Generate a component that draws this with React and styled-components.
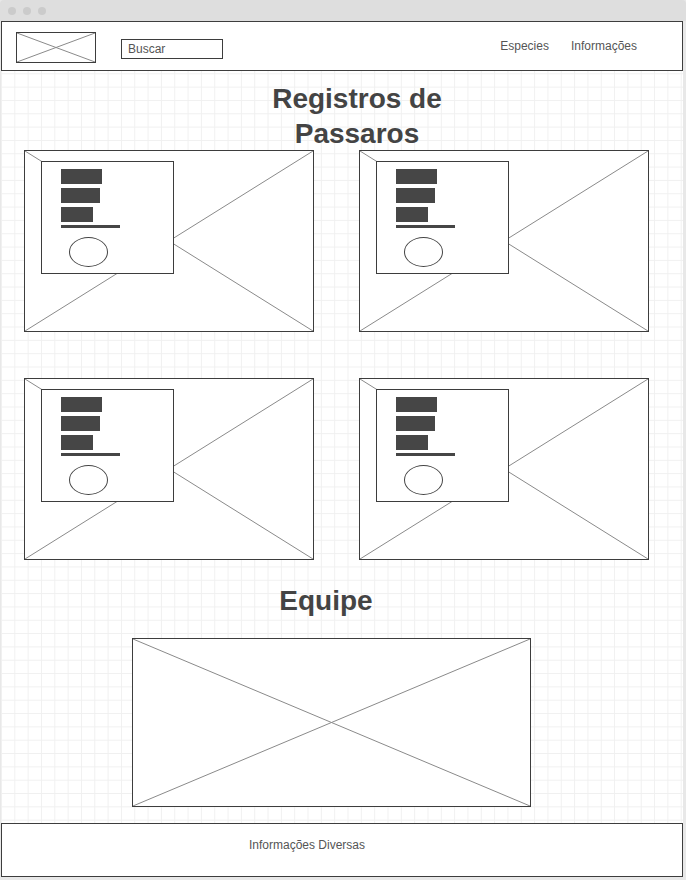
import React from "react"
import styled, { createGlobalStyle } from "styled-components"

const GlobalStyle = createGlobalStyle`
	html, body {
		margin: 0;
		padding: 0;
		background: #e8e8e8;
	}
	body {
		font-family: "Liberation Sans", Arial, sans-serif;
	}
`

const Window = styled.div`
	width: 686px;
	height: 880px;
	background: #e8e8e8;
	display: flex;
	flex-direction: column;
`

const TitleBar = styled.div`
	height: 21px;
	flex: none;
	background: #dedede;
	border-radius: 4px 4px 0 0;
	display: flex;
	align-items: center;
	gap: 7px;
	padding-left: 8px;
	box-sizing: border-box;
`

const Dot = styled.span`
	width: 8px;
	height: 8px;
	border-radius: 50%;
	background: #cbcbcb;
`

const Canvas = styled.div`
	margin: 0 3px 3px 1px;
	height: 856px;
	background-color: #ffffff;
	background-image:
		linear-gradient(#f0f0f0 1px, transparent 1px),
		linear-gradient(90deg, #f0f0f0 1px, transparent 1px);
	background-size: 13.333px 13.333px;
	background-position: 0 -1px;
	display: flex;
	flex-direction: column;
`

const Header = styled.header`
	height: 50px;
	box-sizing: border-box;
	border: 1px solid #3d3d3d;
	background: #ffffff;
	display: flex;
	align-items: flex-start;
	padding: 10px 0 0 14px;
`

const Placeholder = styled.div`
	position: relative;
	box-sizing: border-box;
	border: 1px solid #3d3d3d;
	background: #ffffff;
	width: ${(p) => p.$w}px;
	height: ${(p) => p.$h}px;
	flex: none;

	svg.cross {
		position: absolute;
		inset: 0;
		width: 100%;
		height: 100%;
	}
`

const Search = styled.div`
	margin: 7px 0 0 25px;
	width: 102px;
	height: 20px;
	box-sizing: border-box;
	border: 1px solid #3d3d3d;
	padding-left: 6px;
	font-size: 12px;
	line-height: 18px;
	color: #555555;
`

const Nav = styled.nav`
	margin-left: auto;
	margin-right: 45px;
	display: flex;
	gap: 22px;
	font-size: 12px;
	line-height: 28px;
	color: #555555;
`

const SectionTitle = styled.h1`
	margin: ${(p) => p.$top}px 0 ${(p) => p.$bottom}px ${(p) => p.$left}px;
	width: 200px;
	text-align: center;
	font-size: 28px;
	line-height: 35px;
	font-weight: 700;
	color: #444444;
`

const CardGrid = styled.div`
	display: grid;
	grid-template-columns: 290px 290px;
	grid-auto-rows: 182px;
	column-gap: 45px;
	row-gap: 46px;
	padding-left: 23px;
`

const Card = styled.div`
	position: relative;
	box-sizing: border-box;
	border: 1px solid #3d3d3d;
	background: #ffffff;
	padding: 10px 0 0 16px;

	svg.cross {
		position: absolute;
		inset: 0;
		width: 100%;
		height: 100%;
	}
`

const InfoBox = styled.div`
	position: relative;
	width: 133px;
	height: 113px;
	box-sizing: border-box;
	border: 1px solid #3d3d3d;
	background: #ffffff;
	padding: 7px 0 0 19px;
	display: flex;
	flex-direction: column;
	align-items: flex-start;
`

const Bar = styled.div`
	width: ${(p) => p.$w}px;
	height: 15px;
	background: #464646;
	margin-bottom: 4px;
`

const Rule = styled.div`
	width: 59px;
	height: 3px;
	background: #464646;
	margin-top: -1px;
`

const Oval = styled.div`
	margin: 9px 0 0 8px;
	width: 39px;
	height: 30px;
	box-sizing: border-box;
	border: 1px solid #444444;
	border-radius: 50%;
`

const Footer = styled.footer`
	margin-top: 16px;
	height: 54px;
	box-sizing: border-box;
	border: 1px solid #3d3d3d;
	background: #ffffff;
	padding: 14px 0 0 247px;
	font-size: 12px;
	line-height: 14px;
	color: #555555;
`

const Cross = () => (
	<svg className="cross" viewBox="0 0 100 100" preserveAspectRatio="none">
		<line x1="0" y1="0" x2="100" y2="100" stroke="#8a8a8a" strokeWidth="1" vectorEffect="non-scaling-stroke" />
		<line x1="100" y1="0" x2="0" y2="100" stroke="#8a8a8a" strokeWidth="1" vectorEffect="non-scaling-stroke" />
	</svg>
)

const BirdCard = () => (
	<Card>
		<Cross />
		<InfoBox>
			<Bar $w={41} />
			<Bar $w={39} />
			<Bar $w={32} />
			<Rule />
			<Oval />
		</InfoBox>
	</Card>
)

const App = () => {
	return (
		<>
			<GlobalStyle />
			<Window>
				<TitleBar>
					<Dot />
					<Dot />
					<Dot />
				</TitleBar>
				<Canvas>
					<Header>
						<Placeholder $w={80} $h={31}>
							<Cross />
						</Placeholder>
						<Search>Buscar</Search>
						<Nav>
							<span>Especies</span>
							<span>Informações</span>
						</Nav>
					</Header>

					<SectionTitle $top={10} $bottom={-1} $left={256}>
						Registros de Passaros
					</SectionTitle>

					<CardGrid>
						<BirdCard />
						<BirdCard />
						<BirdCard />
						<BirdCard />
					</CardGrid>

					<SectionTitle $top={23} $bottom={1} $left={225}>
						Equipe
					</SectionTitle>

					<Placeholder $w={399} $h={169} style={{ marginTop: 19, marginLeft: 131 }}>
						<Cross />
					</Placeholder>

					<Footer>Informações Diversas</Footer>
				</Canvas>
			</Window>
		</>
	)
}

export default App
